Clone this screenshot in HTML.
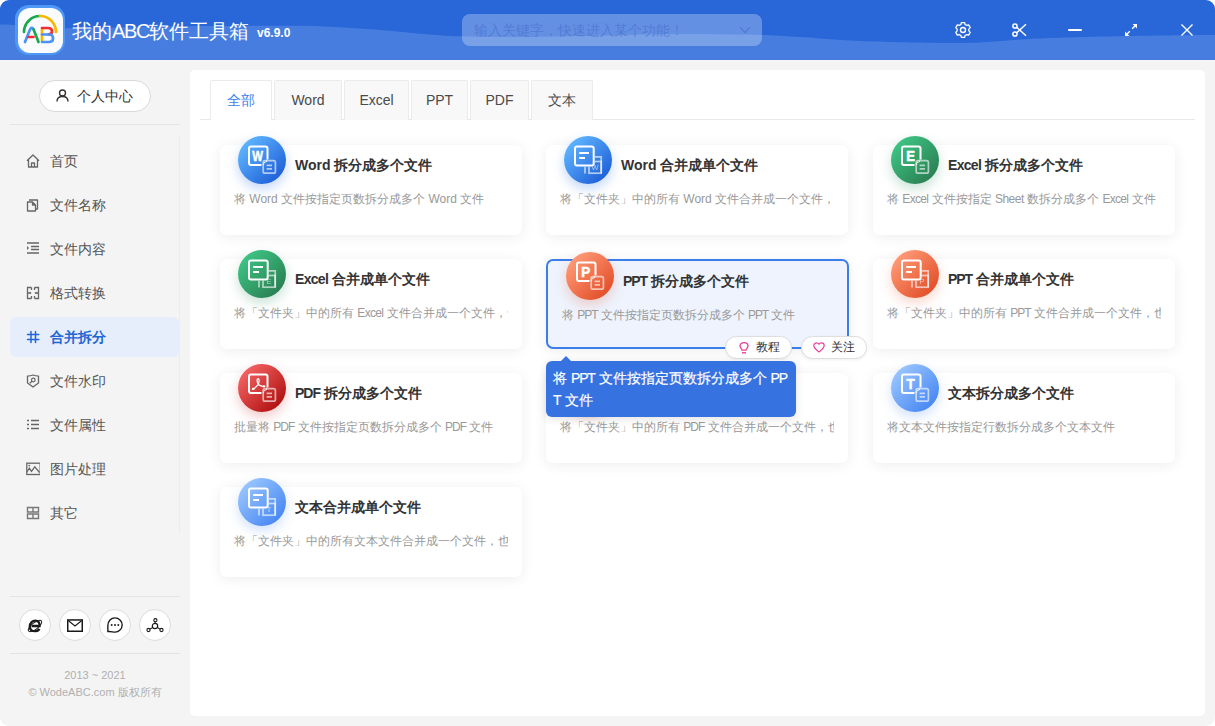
<!DOCTYPE html>
<html><head><meta charset="utf-8">
<style>
*{box-sizing:border-box;margin:0;padding:0}
html,body{width:1215px;height:726px;overflow:hidden;background:#fff;font-family:"Liberation Sans",sans-serif}
.win{position:absolute;left:0;top:0;width:1215px;height:726px;border-radius:9px;overflow:hidden;background:#f4f4f4}
.abs{position:absolute}
.t{position:absolute;white-space:nowrap}
.hdr{position:absolute;left:0;top:0;width:1215px;height:60px}
.logo{position:absolute;left:15px;top:5px;width:50px;height:50px;border-radius:14px;background:#4f98f6}
.logo .in{position:absolute;left:2.5px;top:2.5px;width:45px;height:45px;border-radius:12px;background:#f9fbff}
.title{left:72px;top:20px;font-size:20px;line-height:22px;color:#fff}
.ver{left:257px;top:26px;font-size:12px;line-height:14px;color:#fff;font-weight:bold}
.search{position:absolute;left:462px;top:14px;width:300px;height:32px;border-radius:8px;background:rgba(255,255,255,0.28)}
.search .ph{left:12px;top:8px;font-size:14px;line-height:16px;color:rgba(75,115,205,0.72)}
.side{position:absolute;left:0;top:60px;width:190px;height:666px}
.ubtn{position:absolute;left:39px;top:80px;width:112px;height:32px;border:1px solid #d9d9d9;border-radius:16px;background:#fff}
.sep{position:absolute;left:10px;width:170px;height:1px;background:#e3e3e3}
.nav{position:absolute;left:10px;width:169px;height:40px;border-radius:6px}
.nav .ic{position:absolute;left:16px;top:13px;width:14px;height:14px}
.nav .tx{position:absolute;left:40px;top:11px;font-size:14px;line-height:18px;color:#555;white-space:nowrap}
.nav.on{background:#e6eefc}
.nav.on .tx{color:#2266d4;font-weight:bold}
.circ{position:absolute;top:609px;width:32px;height:32px;border-radius:50%;border:1px solid #dcdcdc;background:#fff}
.circ svg{position:absolute;left:7px;top:7px}
.foot{position:absolute;left:0;width:190px;text-align:center;font-size:11px;line-height:14px;color:#b0b0b0}
.main{position:absolute;left:190px;top:70px;width:1015px;height:646px;background:#fff;border-radius:5px}
.tab{position:absolute;top:80px;height:40px;border:1px solid #ebebeb;border-bottom:none;background:#f8f8f8;border-radius:2px 2px 0 0;font-size:14px;line-height:38px;text-align:center;color:#4a4a4a}
.tab.on{background:#fff;color:#3b80f0;height:40px;z-index:2}
.tabline{position:absolute;left:200px;top:119px;width:995px;height:1px;background:#e8e8e8}
.card{position:absolute;width:302px;height:90px;border-radius:7px;background:#fff;box-shadow:0 2px 14px rgba(0,0,0,0.075)}
.card .ico{position:absolute;left:18px;top:-9px;width:48px;height:48px;border-radius:50%}
.card .ico svg{position:absolute;left:0;top:0}
.card .ttl{position:absolute;left:75px;top:11px;font-size:14px;line-height:18px;font-weight:bold;color:#333;white-space:nowrap}
.card .dsc{position:absolute;left:14px;top:46px;width:274px;overflow:hidden;font-size:12px;line-height:16px;color:#999;white-space:nowrap}
.blue{background:linear-gradient(135deg,#5fb6ff 12%,#1f5fd8 88%);box-shadow:0 5px 12px rgba(40,110,230,0.28)}
.green{background:linear-gradient(135deg,#3ec584 12%,#2a7f52 88%);box-shadow:0 5px 12px rgba(40,140,90,0.25)}
.orange{background:linear-gradient(135deg,#ff9b78 12%,#e24e28 88%);box-shadow:0 5px 12px rgba(230,90,50,0.25)}
.red{background:linear-gradient(135deg,#f46464 12%,#b01010 88%);box-shadow:0 5px 12px rgba(200,40,40,0.25)}
.lblue{background:linear-gradient(135deg,#9ac6ff 12%,#4787f2 88%);box-shadow:0 5px 12px rgba(80,140,240,0.25)}
.card.hov{background:#eef3fd;border:2px solid #3b7eea;box-shadow:0 2px 14px rgba(0,0,0,0.075);width:303px}
.card.hov .ico{left:18px;top:-9px}
.card.hov .ttl{left:75px;top:11px}
.card.hov .dsc{left:14px;top:46px}
.pill{position:absolute;top:336px;height:23px;border:1px solid #dedede;border-radius:11.5px;background:#fff;box-shadow:0 1px 3px rgba(0,0,0,0.06);z-index:5}
.pill .tx{position:absolute;left:30px;top:3px;font-size:12px;line-height:15px;color:#333;white-space:nowrap}
.pill svg{position:absolute;left:13px;top:5px}
.tip{position:absolute;left:546px;top:361px;width:250px;height:56px;border-radius:6px;background:#3773e0;z-index:6;box-shadow:0 2px 8px rgba(0,0,0,0.12)}
.tip:before{content:"";position:absolute;left:15px;top:-5px;border-left:5px solid transparent;border-right:5px solid transparent;border-bottom:5px solid #3773e0}
.tip .tx{position:absolute;left:7px;top:6px;width:240px;font-size:14px;line-height:22px;color:#fff;font-weight:normal;-webkit-text-stroke:0.2px #fff;white-space:nowrap}
</style></head><body>
<div class="win">
 <!-- header -->
 <svg class="hdr" width="1215" height="60" viewBox="0 0 1215 60">
  <rect width="1215" height="60" fill="#2966d8"/>
  <path d="M0,60 L0,24.4 L5,24.6 L10,24.8 L15,25.0 L20,25.2 L25,25.5 L30,25.8 L35,26.2 L40,26.6 L45,27.0 L50,27.4 L55,27.8 L60,28.1 L65,28.2 L70,28.3 L75,28.3 L80,28.2 L85,28.2 L90,28.1 L95,28.0 L100,27.9 L105,27.8 L110,27.7 L115,27.5 L120,27.4 L125,27.3 L130,27.1 L135,27.0 L140,26.9 L145,26.8 L150,26.7 L155,26.6 L160,26.5 L165,26.4 L170,26.4 L175,26.3 L180,26.3 L185,26.2 L190,26.2 L195,26.1 L200,26.1 L205,26.1 L210,26.0 L215,26.0 L220,25.9 L225,25.9 L230,25.9 L235,25.9 L240,25.8 L245,25.8 L250,25.8 L255,25.8 L260,25.8 L265,25.8 L270,25.7 L275,25.7 L280,25.7 L285,25.7 L290,25.7 L295,25.7 L300,25.7 L305,25.7 L310,25.9 L315,26.0 L320,26.3 L325,26.5 L330,26.8 L335,27.0 L340,27.3 L345,27.5 L350,27.9 L355,28.2 L360,28.5 L365,28.9 L370,29.3 L375,29.6 L380,30.0 L385,30.4 L390,30.8 L395,31.2 L400,31.7 L405,32.2 L410,32.7 L415,33.2 L420,33.7 L425,34.1 L430,34.6 L435,35.0 L440,35.3 L445,35.7 L450,35.9 L455,36.2 L460,36.3 L465,36.4 L470,36.5 L475,36.6 L480,36.7 L485,36.8 L490,36.8 L495,36.9 L500,36.9 L505,37.0 L510,37.0 L515,37.0 L520,37.0 L525,37.0 L530,36.9 L535,36.9 L540,36.8 L545,36.7 L550,36.6 L555,36.5 L560,36.4 L565,36.3 L570,36.2 L575,36.0 L580,35.9 L585,35.8 L590,35.7 L595,35.6 L600,35.5 L605,35.4 L610,35.3 L615,35.2 L620,35.1 L625,34.9 L630,34.8 L635,34.7 L640,34.6 L645,34.5 L650,34.3 L655,34.3 L660,34.2 L665,34.1 L670,34.0 L675,34.0 L680,34.0 L685,34.0 L690,34.0 L695,34.0 L700,34.1 L705,34.1 L710,34.1 L715,34.2 L720,34.2 L725,34.3 L730,34.3 L735,34.4 L740,34.5 L745,34.5 L750,34.6 L755,34.7 L760,34.9 L765,35.1 L770,35.3 L775,35.5 L780,35.8 L785,36.1 L790,36.4 L795,36.7 L800,37.0 L805,37.3 L810,37.6 L815,38.0 L820,38.4 L825,38.8 L830,39.2 L835,39.6 L840,39.9 L845,40.3 L850,40.6 L855,40.8 L860,41.0 L865,41.2 L870,41.3 L875,41.5 L880,41.6 L885,41.8 L890,41.9 L895,42.0 L900,42.2 L905,42.3 L910,42.4 L915,42.5 L920,42.6 L925,42.7 L930,42.8 L935,42.8 L940,42.9 L945,42.9 L950,43.0 L955,43.0 L960,43.0 L965,43.0 L970,42.8 L975,42.7 L980,42.4 L985,42.1 L990,41.8 L995,41.4 L1000,41.1 L1005,40.7 L1010,40.3 L1015,39.9 L1020,39.5 L1025,39.2 L1030,38.9 L1035,38.6 L1040,38.4 L1045,38.2 L1050,38.0 L1055,37.9 L1060,37.7 L1065,37.6 L1070,37.4 L1075,37.2 L1080,37.1 L1085,37.0 L1090,36.8 L1095,36.7 L1100,36.6 L1105,36.5 L1110,36.4 L1115,36.3 L1120,36.2 L1125,36.1 L1130,36.0 L1135,35.9 L1140,35.8 L1145,35.8 L1150,35.7 L1155,35.6 L1160,35.5 L1165,35.5 L1170,35.4 L1175,35.3 L1180,35.3 L1185,35.2 L1190,35.2 L1195,35.1 L1200,35.1 L1205,35.1 L1210,35.0 L1215,35.0 L1215,60 Z" fill="#467ddf"/>
 </svg>
 <div class="logo"><div class="in"></div>
  <svg class="abs" style="left:0;top:0" width="50" height="50" viewBox="15 5 50 50">
   <path d="M24,32 A16,16 0 0 1 40,16" fill="none" stroke="#18a94a" stroke-width="2.7" stroke-linecap="round"/>
   <path d="M40,16 A16,16 0 0 1 56,32" fill="none" stroke="#f7b800" stroke-width="2.7" stroke-linecap="round"/>
   <path d="M25,42 L30,29.5 Q31.8,26 33.6,29.5" fill="none" stroke="#4a93f5" stroke-width="2.7" stroke-linecap="round"/>
   <path d="M33.6,29.5 L38.5,42" fill="none" stroke="#18a94a" stroke-width="2.7" stroke-linecap="round"/>
   <path d="M28.5,37 L33.5,37" fill="none" stroke="#f03030" stroke-width="2.7" stroke-linecap="round"/>
   <path d="M42,29 L42,41" fill="none" stroke="#f7b800" stroke-width="2.7" stroke-linecap="butt"/>
   <path d="M42,28 L48,28 Q52,28 52,31.3 Q52,34.3 48.5,34.3" fill="none" stroke="#f03030" stroke-width="2.7" stroke-linecap="round"/>
   <path d="M42,34.5 L49,34.5 Q53,34.5 53,38.2 Q53,42 49,42 L42,42" fill="none" stroke="#4a93f5" stroke-width="2.7" stroke-linecap="round"/>
  </svg>
 </div>
 <div class="t title">我的<span style="letter-spacing:-1.4px">ABC</span>软件工具箱</div>
 <div class="t ver">v6.9.0</div>
 <div class="search"><div class="t ph">输入关键字，快速进入某个功能！</div>
  <svg class="abs" style="left:277px;top:12px" width="12" height="8" viewBox="0 0 12 8"><path d="M1,1 L6,6.5 L11,1" fill="none" stroke="rgba(70,110,200,0.6)" stroke-width="1.3"/></svg>
 </div>
 <!-- header icons -->
 <svg class="abs" style="left:955px;top:22px" width="16" height="16" viewBox="0 0 16 16">
  <path d="M5.89,2.49 L6.42,0.57 L9.58,0.57 L10.11,2.49 L11.71,3.41 L13.65,2.91 L15.23,5.65 L13.83,7.08 L13.83,8.92 L15.23,10.35 L13.65,13.09 L11.71,12.59 L10.11,13.51 L9.58,15.43 L6.42,15.43 L5.89,13.51 L4.29,12.59 L2.35,13.09 L0.77,10.35 L2.17,8.92 L2.17,7.08 L0.77,5.65 L2.35,2.91 L4.29,3.41 Z" fill="none" stroke="#fff" stroke-width="1.3" stroke-linejoin="round"/>
  <circle cx="8" cy="8" r="2.5" fill="none" stroke="#fff" stroke-width="1.4"/>
 </svg>
 <svg class="abs" style="left:1012px;top:23px" width="15" height="14" viewBox="0 0 15 14">
  <circle cx="3" cy="3" r="2.1" fill="none" stroke="#fff" stroke-width="1.5"/>
  <circle cx="3" cy="11" r="2.1" fill="none" stroke="#fff" stroke-width="1.5"/>
  <path d="M4.7,4.3 L14,12.8 M4.7,9.7 L14,1.2" stroke="#fff" stroke-width="1.5"/>
 </svg>
 <div class="abs" style="left:1068px;top:29px;width:14px;height:2px;background:#fff;border-radius:1px"></div>
 <svg class="abs" style="left:1124px;top:23px" width="14" height="14" viewBox="0 0 14 14"><path d="M8.2,5.8 L12.5,1.5 M5.8,8.2 L1.5,12.5" stroke="#fff" stroke-width="1.4"/><path d="M8.6,1 L13,1 L13,5.4 Z M1,8.6 L1,13 L5.4,13 Z" fill="#fff"/></svg>
 <svg class="abs" style="left:1180px;top:23px" width="14" height="14" viewBox="0 0 14 14"><path d="M1.5,1.5 L12.5,12.5 M12.5,1.5 L1.5,12.5" stroke="#fff" stroke-width="1.4"/></svg>

 <!-- sidebar -->
 <div class="ubtn">
  <svg class="abs" style="left:16px;top:8px" width="13" height="13" viewBox="0 0 13 13">
   <circle cx="6.5" cy="4" r="3" fill="none" stroke="#333" stroke-width="1.4"/>
   <path d="M1,12.5 C1,8.5 3.5,7.5 6.5,7.5 C9.5,7.5 12,8.5 12,12.5" fill="none" stroke="#333" stroke-width="1.4"/>
  </svg>
  <div class="t" style="left:37px;top:6px;font-size:14px;line-height:18px;color:#333">个人中心</div>
 </div>
 <div class="sep" style="top:124px"></div>
 <div class="abs" style="left:179px;top:136px;width:1px;height:398px;background:#ececec"></div>

 <div class="nav" style="top:141px">
  <svg class="ic" viewBox="0 0 14 14"><path d="M1,6.8 L7,1 L13,6.8 M2.5,5.5 L2.5,13 L11.5,13 L11.5,5.5 M5.5,13 L5.5,9 L8.5,9 L8.5,13" fill="none" stroke="#666" stroke-width="1.3" stroke-linejoin="round"/></svg>
  <div class="tx">首页</div></div>
 <div class="nav" style="top:185px">
  <svg class="ic" viewBox="0 0 14 14"><path d="M3,2 L11.5,2 L11.5,11 L9.5,11 M1.5,4 L6.5,4 L9.5,7 L9.5,13 L1.5,13 Z M6.5,4 L6.5,7 L9.5,7" fill="none" stroke="#666" stroke-width="1.3" stroke-linejoin="round"/></svg>
  <div class="tx">文件名称</div></div>
 <div class="nav" style="top:229px">
  <svg class="ic" viewBox="0 0 14 14"><path d="M1,1 L13,1 M5,4.5 L13,4.5 M5,7.5 L13,7.5 M1,11 L13,11" stroke="#666" stroke-width="1.3"/><path d="M1,4 L3,6 L1,8 Z" fill="#666"/></svg>
  <div class="tx">文件内容</div></div>
 <div class="nav" style="top:273px">
  <svg class="ic" viewBox="0 0 14 14"><path d="M5.5,1.5 L1.5,1.5 L1.5,12.5 L5.5,12.5 M8.5,1.5 L12.5,1.5 L12.5,12.5 L8.5,12.5 M5.5,1.5 L5.5,4 M5.5,10 L5.5,12.5 M8.5,1.5 L8.5,4 M8.5,10 L8.5,12.5 M1.5,7 L4,7 M10,7 L12.5,7" fill="none" stroke="#666" stroke-width="1.3"/><path d="M3.8,5.5 L5.6,7 L3.8,8.5 Z M10.2,5.5 L8.4,7 L10.2,8.5 Z" fill="#666"/></svg>
  <div class="tx">格式转换</div></div>
 <div class="nav on" style="top:317px">
  <svg class="ic" viewBox="0 0 14 14"><path d="M5,1.5 L5,12.5 M9.5,1.5 L9.5,12.5 M1.5,4.5 L12.8,4.5 M1.5,9.5 L12.8,9.5" stroke="#1f66d6" stroke-width="1.5" stroke-linecap="round"/></svg>
  <div class="tx">合并拆分</div></div>
 <div class="nav" style="top:361px">
  <svg class="ic" viewBox="0 0 14 14"><path d="M7,1 C5,1.6 3,2 1.5,2.2 L1.5,9 L7,13 L12.5,9 L12.5,2.2 C11,2 9,1.6 7,1 Z" fill="none" stroke="#666" stroke-width="1.3" stroke-linejoin="round"/><circle cx="7.3" cy="6" r="1.8" fill="none" stroke="#666" stroke-width="1.2"/><path d="M6,7.3 L3.8,9.3" stroke="#666" stroke-width="1.2"/></svg>
  <div class="tx">文件水印</div></div>
 <div class="nav" style="top:405px">
  <svg class="ic" viewBox="0 0 14 14"><path d="M1,2.5 L3,2.5 M5,2.5 L13,2.5 M1,6.5 L3,6.5 M5,6.5 L13,6.5 M1,10.5 L3,10.5 M5,10.5 L13,10.5" stroke="#666" stroke-width="1.6"/></svg>
  <div class="tx">文件属性</div></div>
 <div class="nav" style="top:449px">
  <svg class="ic" viewBox="0 0 14 14"><rect x="0.8" y="1.2" width="13.4" height="11.3" fill="none" stroke="#666" stroke-width="1.3"/><path d="M1,10 L3.3,6.2 L5.5,9.4 L8.8,4.8 L13.5,10.5" fill="none" stroke="#666" stroke-width="1.2"/><circle cx="3.3" cy="3.6" r="0.9" fill="#666"/></svg>
  <div class="tx">图片处理</div></div>
 <div class="nav" style="top:493px">
  <svg class="ic" viewBox="0 0 14 14"><path d="M1.5,1.5 H12.5 V6 H1.5 Z M1.5,8 H12.5 V12.5 H1.5 Z M7,1.5 V6 M7,8 V12.5" fill="none" stroke="#777" stroke-width="1.4"/></svg>
  <div class="tx">其它</div></div>

 <div class="sep" style="top:596px"></div>
 <div class="circ" style="left:19px">
  <svg width="16" height="16" viewBox="0 0 16 16"><path d="M4.6,9 H12.6 C12.9,5.6 11,3.6 8.3,3.6 C5.3,3.6 2.8,6.2 2.8,9.4 C2.8,12.4 5,14.2 8,14.2 C10,14.2 11.6,13.4 12.6,12" fill="none" stroke="#1a1a1a" stroke-width="2.3"/><ellipse cx="8" cy="9" rx="8.2" ry="3.2" transform="rotate(-38 8 9)" fill="none" stroke="#1a1a1a" stroke-width="1"/></svg>
 </div>
 <div class="circ" style="left:59px">
  <svg width="16" height="16" viewBox="0 0 16 16"><rect x="0.75" y="2.95" width="14.5" height="11.3" fill="none" stroke="#1a1a1a" stroke-width="1.5"/><path d="M1.5,3.8 L8,9 L14.5,3.8" fill="none" stroke="#1a1a1a" stroke-width="1.1"/></svg>
 </div>
 <div class="circ" style="left:99px">
  <svg width="16" height="16" viewBox="0 0 16 16" style="overflow:visible"><g transform="translate(8,8) scale(1.1) translate(-8,-8)"><path d="M1.5,14 L1.5,8.5 C1.5,4.5 4.5,1.5 8,1.5 C11.5,1.5 14.5,4.3 14.5,8 C14.5,11.7 11.5,14.5 8,14.5 C6,14.5 4,13.5 1.5,14 Z" fill="none" stroke="#1a1a1a" stroke-width="1.25" stroke-linejoin="round"/><circle cx="5" cy="8" r="0.9" fill="#222"/><circle cx="8" cy="8" r="0.9" fill="#222"/><circle cx="11" cy="8" r="0.9" fill="#222"/></g></svg>
 </div>
 <div class="circ" style="left:139px">
  <svg width="16" height="16" viewBox="0 0 16 16" style="overflow:visible"><circle cx="8.4" cy="3.2" r="1.6" fill="none" stroke="#1a1a1a" stroke-width="1.1"/><circle cx="8" cy="9" r="2.7" fill="none" stroke="#1a1a1a" stroke-width="1.2"/><circle cx="1.5" cy="13" r="1.6" fill="none" stroke="#1a1a1a" stroke-width="1.1"/><circle cx="14.5" cy="13" r="1.6" fill="none" stroke="#1a1a1a" stroke-width="1.1"/><path d="M8.2,4.8 L8.1,6.3 M5.7,10.4 L2.9,12.2 M10.3,10.4 L13.1,12.2" stroke="#1a1a1a" stroke-width="1.1"/></svg>
 </div>
 <div class="sep" style="top:653px"></div>
 <div class="foot" style="top:668px">2013 ~ 2021</div>
 <div class="foot" style="top:685px">© WodeABC.com 版权所有</div>

 <!-- main -->
 <div class="main"></div>
 <div class="tabline"></div>
 <div class="tab on" style="left:210px;width:62px">全部</div>
 <div class="tab" style="left:274px;width:68px">Word</div>
 <div class="tab" style="left:344px;width:65px">Excel</div>
 <div class="tab" style="left:411px;width:57px">PPT</div>
 <div class="tab" style="left:470px;width:59px">PDF</div>
 <div class="tab" style="left:531px;width:62px">文本</div>

 <div id="cards"><svg width="0" height="0" style="position:absolute"><defs><mask id="mk" maskUnits="userSpaceOnUse" x="0" y="0" width="48" height="48"><rect x="0" y="0" width="48" height="48" fill="#fff"/><rect x="10" y="9.6" width="20.7" height="20.9" rx="2.5" fill="#000"/></mask></defs></svg>
<div class="card" style="left:220px;top:145px"><div class="ico blue"><svg width="48" height="48" viewBox="0 0 48 48"><path d="M13,10.5 H27.5 Q29.5,10.5 29.5,12.5 V23.5 M23.5,29 H13 Q11,29 11,27 V12.5 Q11,10.5 13,10.5" fill="none" stroke="#fff" stroke-width="2"/><path d="M25,28.5 L29,24.5" stroke="#fff" stroke-width="1.4" stroke-dasharray="1.2 0.8"/><text transform="translate(19.6,24.8) scale(0.78,1)" x="0" y="0" text-anchor="middle" font-family="Liberation Sans" font-weight="bold" font-size="14.5" fill="#fff" stroke="#fff" stroke-width="0.55">W</text><rect x="25.2" y="24.7" width="12.2" height="12.5" rx="1.8" fill="none" stroke="rgba(255,255,255,0.62)" stroke-width="1.7"/><path d="M28.6,29.3 H34 M28.6,32.8 H34" stroke="rgba(255,255,255,0.62)" stroke-width="1.7"/></svg></div><div class="ttl">Word 拆分成多个文件</div><div class="dsc">将 Word 文件按指定页数拆分成多个 Word 文件</div></div>
<div class="card" style="left:546px;top:145px"><div class="ico blue"><svg width="48" height="48" viewBox="0 0 48 48"><g mask="url(#mk)"><path d="M21,30.5 V37.5 M30.5,20.8 H37.2 V37.2" fill="none" stroke="rgba(255,255,255,0.62)" stroke-width="1.7"/><rect x="25" y="25.5" width="12.2" height="11.7" fill="none" stroke="rgba(255,255,255,0.62)" stroke-width="1.7"/><text x="31" y="34" text-anchor="middle" font-family="Liberation Sans" font-size="7.5" fill="rgba(255,255,255,0.62)">W</text></g><rect x="11" y="10.6" width="18.7" height="18.9" rx="2" fill="none" stroke="#fff" stroke-width="2"/><path d="M15.2,17 H25 M15.2,22 H21" stroke="#fff" stroke-width="2"/></svg></div><div class="ttl">Word 合并成单个文件</div><div class="dsc">将「文件夹」中的所有 Word 文件合并成一个文件，也可以</div></div>
<div class="card" style="left:873px;top:145px"><div class="ico green"><svg width="48" height="48" viewBox="0 0 48 48"><path d="M13,10.5 H27.5 Q29.5,10.5 29.5,12.5 V23.5 M23.5,29 H13 Q11,29 11,27 V12.5 Q11,10.5 13,10.5" fill="none" stroke="#fff" stroke-width="2"/><path d="M25,28.5 L29,24.5" stroke="#fff" stroke-width="1.4" stroke-dasharray="1.2 0.8"/><text transform="translate(19.6,24.8) scale(0.9,1)" x="0" y="0" text-anchor="middle" font-family="Liberation Sans" font-weight="bold" font-size="14.5" fill="#fff" stroke="#fff" stroke-width="0.55">E</text><rect x="25.2" y="24.7" width="12.2" height="12.5" rx="1.8" fill="none" stroke="rgba(255,255,255,0.62)" stroke-width="1.7"/><path d="M28.6,29.3 H34 M28.6,32.8 H34" stroke="rgba(255,255,255,0.62)" stroke-width="1.7"/></svg></div><div class="ttl"><span style="letter-spacing:-0.7px">Excel</span> 拆分成多个文件</div><div class="dsc">将 <span style="letter-spacing:-0.7px">Excel</span> 文件按指定 <span style="letter-spacing:-0.5px">Sheet</span> 数拆分成多个 <span style="letter-spacing:-0.7px">Excel</span> 文件</div></div>
<div class="card" style="left:220px;top:259px"><div class="ico green"><svg width="48" height="48" viewBox="0 0 48 48"><g mask="url(#mk)"><path d="M21,30.5 V37.5 M30.5,20.8 H37.2 V37.2" fill="none" stroke="rgba(255,255,255,0.62)" stroke-width="1.7"/><rect x="25" y="25.5" width="12.2" height="11.7" fill="none" stroke="rgba(255,255,255,0.62)" stroke-width="1.7"/><text x="31" y="34" text-anchor="middle" font-family="Liberation Sans" font-size="7.5" fill="rgba(255,255,255,0.62)">E</text></g><rect x="11" y="10.6" width="18.7" height="18.9" rx="2" fill="none" stroke="#fff" stroke-width="2"/><path d="M15.2,17 H25 M15.2,22 H21" stroke="#fff" stroke-width="2"/></svg></div><div class="ttl"><span style="letter-spacing:-0.7px">Excel</span> 合并成单个文件</div><div class="dsc">将「文件夹」中的所有 <span style="letter-spacing:-0.7px">Excel</span> 文件合并成一个文件，也可以</div></div>
<div class="card hov" style="left:546px;top:259px"><div class="ico orange"><svg width="48" height="48" viewBox="0 0 48 48"><path d="M13,10.5 H27.5 Q29.5,10.5 29.5,12.5 V23.5 M23.5,29 H13 Q11,29 11,27 V12.5 Q11,10.5 13,10.5" fill="none" stroke="#fff" stroke-width="2"/><path d="M25,28.5 L29,24.5" stroke="#fff" stroke-width="1.4" stroke-dasharray="1.2 0.8"/><text transform="translate(19.6,24.8) scale(0.92,1)" x="0" y="0" text-anchor="middle" font-family="Liberation Sans" font-weight="bold" font-size="14.5" fill="#fff" stroke="#fff" stroke-width="0.55">P</text><rect x="25.2" y="24.7" width="12.2" height="12.5" rx="1.8" fill="none" stroke="rgba(255,255,255,0.62)" stroke-width="1.7"/><path d="M28.6,29.3 H34 M28.6,32.8 H34" stroke="rgba(255,255,255,0.62)" stroke-width="1.7"/></svg></div><div class="ttl"><span style="letter-spacing:-1.1px">PPT</span> 拆分成多个文件</div><div class="dsc">将 <span style="letter-spacing:-1.1px">PPT</span> 文件按指定页数拆分成多个 <span style="letter-spacing:-1.1px">PPT</span> 文件</div></div>
<div class="card" style="left:873px;top:259px"><div class="ico orange"><svg width="48" height="48" viewBox="0 0 48 48"><g mask="url(#mk)"><path d="M21,30.5 V37.5 M30.5,20.8 H37.2 V37.2" fill="none" stroke="rgba(255,255,255,0.62)" stroke-width="1.7"/><rect x="25" y="25.5" width="12.2" height="11.7" fill="none" stroke="rgba(255,255,255,0.62)" stroke-width="1.7"/><text x="31" y="34" text-anchor="middle" font-family="Liberation Sans" font-size="7.5" fill="rgba(255,255,255,0.62)">P</text></g><rect x="11" y="10.6" width="18.7" height="18.9" rx="2" fill="none" stroke="#fff" stroke-width="2"/><path d="M15.2,17 H25 M15.2,22 H21" stroke="#fff" stroke-width="2"/></svg></div><div class="ttl"><span style="letter-spacing:-1.1px">PPT</span> 合并成单个文件</div><div class="dsc">将「文件夹」中的所有 <span style="letter-spacing:-1.1px">PPT</span> 文件合并成一个文件，也可以</div></div>
<div class="card" style="left:220px;top:373px"><div class="ico red"><svg width="48" height="48" viewBox="0 0 48 48"><path d="M13,10.5 H27.5 Q29.5,10.5 29.5,12.5 V23.5 M23.5,29 H13 Q11,29 11,27 V12.5 Q11,10.5 13,10.5" fill="none" stroke="#fff" stroke-width="2"/><path d="M25,28.5 L29,24.5" stroke="#fff" stroke-width="1.4" stroke-dasharray="1.2 0.8"/><path d="M20.2,20.6 C19.3,18.6 18.9,16.6 19.3,15.3 C19.6,14.4 20.7,14.4 20.9,15.3 C21.2,16.6 21,18.6 20.2,20.6 L16.3,24.6 C15.6,25.4 14.6,25.9 14.4,25.2 C14.2,24.5 15.3,24.1 16.3,24.6 M20.2,20.6 L24.4,22.4 C25.5,22.8 26.7,23.2 26.8,22.4 C26.9,21.6 25.4,21.7 24.4,22.4" fill="none" stroke="#fff" stroke-width="1.25" stroke-linejoin="round" stroke-linecap="round"/><rect x="25.2" y="24.7" width="12.2" height="12.5" rx="1.8" fill="none" stroke="rgba(255,255,255,0.62)" stroke-width="1.7"/><path d="M28.6,29.3 H34 M28.6,32.8 H34" stroke="rgba(255,255,255,0.62)" stroke-width="1.7"/></svg></div><div class="ttl"><span style="letter-spacing:-1.0px">PDF</span> 拆分成多个文件</div><div class="dsc">批量将 <span style="letter-spacing:-1.0px">PDF</span> 文件按指定页数拆分成多个 <span style="letter-spacing:-1.0px">PDF</span> 文件</div></div>
<div class="card" style="left:546px;top:373px"><div class="ico red"><svg width="48" height="48" viewBox="0 0 48 48"><g mask="url(#mk)"><path d="M21,30.5 V37.5 M30.5,20.8 H37.2 V37.2" fill="none" stroke="rgba(255,255,255,0.62)" stroke-width="1.7"/><rect x="25" y="25.5" width="12.2" height="11.7" fill="none" stroke="rgba(255,255,255,0.62)" stroke-width="1.7"/><text x="31" y="34" text-anchor="middle" font-family="Liberation Sans" font-size="7.5" fill="rgba(255,255,255,0.62)">P</text></g><rect x="11" y="10.6" width="18.7" height="18.9" rx="2" fill="none" stroke="#fff" stroke-width="2"/><path d="M15.2,17 H25 M15.2,22 H21" stroke="#fff" stroke-width="2"/></svg></div><div class="ttl"><span style="letter-spacing:-1.0px">PDF</span> 合并成单个文件</div><div class="dsc">将「文件夹」中的所有 <span style="letter-spacing:-1.0px">PDF</span> 文件合并成一个文件，也可以</div></div>
<div class="card" style="left:873px;top:373px"><div class="ico lblue"><svg width="48" height="48" viewBox="0 0 48 48"><path d="M13,10.5 H27.5 Q29.5,10.5 29.5,12.5 V23.5 M23.5,29 H13 Q11,29 11,27 V12.5 Q11,10.5 13,10.5" fill="none" stroke="#fff" stroke-width="2"/><path d="M25,28.5 L29,24.5" stroke="#fff" stroke-width="1.4" stroke-dasharray="1.2 0.8"/><text transform="translate(19.6,24.8) scale(0.92,1)" x="0" y="0" text-anchor="middle" font-family="Liberation Sans" font-weight="bold" font-size="14.5" fill="#fff" stroke="#fff" stroke-width="0.55">T</text><rect x="25.2" y="24.7" width="12.2" height="12.5" rx="1.8" fill="none" stroke="rgba(255,255,255,0.62)" stroke-width="1.7"/><path d="M28.6,29.3 H34 M28.6,32.8 H34" stroke="rgba(255,255,255,0.62)" stroke-width="1.7"/></svg></div><div class="ttl">文本拆分成多个文件</div><div class="dsc">将文本文件按指定行数拆分成多个文本文件</div></div>
<div class="card" style="left:220px;top:487px"><div class="ico lblue"><svg width="48" height="48" viewBox="0 0 48 48"><g mask="url(#mk)"><path d="M21,30.5 V37.5 M30.5,20.8 H37.2 V37.2" fill="none" stroke="rgba(255,255,255,0.62)" stroke-width="1.7"/><rect x="25" y="25.5" width="12.2" height="11.7" fill="none" stroke="rgba(255,255,255,0.62)" stroke-width="1.7"/><text x="31" y="34" text-anchor="middle" font-family="Liberation Sans" font-size="7.5" fill="rgba(255,255,255,0.62)">T</text></g><rect x="11" y="10.6" width="18.7" height="18.9" rx="2" fill="none" stroke="#fff" stroke-width="2"/><path d="M15.2,17 H25 M15.2,22 H21" stroke="#fff" stroke-width="2"/></svg></div><div class="ttl">文本合并成单个文件</div><div class="dsc">将「文件夹」中的所有文本文件合并成一个文件，也可以</div></div>
<div class="pill" style="left:725px;width:67px"><svg width="10" height="12" viewBox="0 0 10 12"><path d="M3,8.2 C3,6.8 1,5.8 1,4 C1,2 2.8,0.7 5,0.7 C7.2,0.7 9,2 9,4 C9,5.8 7,6.8 7,8.2 Z" fill="none" stroke="#e8409a" stroke-width="1.3" stroke-linejoin="round"/><path d="M3,10.8 H7" stroke="#e8409a" stroke-width="1.4"/></svg><div class="tx">教程</div></div>
<div class="pill" style="left:801px;width:66px"><svg style="left:11px" width="12" height="11" viewBox="0 0 12 11"><path d="M6,10 C3,7.8 0.8,6 0.8,3.6 C0.8,1.9 2.1,0.8 3.5,0.8 C4.6,0.8 5.5,1.4 6,2.3 C6.5,1.4 7.4,0.8 8.5,0.8 C9.9,0.8 11.2,1.9 11.2,3.6 C11.2,6 9,7.8 6,10 Z" fill="none" stroke="#e8409a" stroke-width="1.2" stroke-linejoin="round"/></svg><div class="tx" style="left:29px">关注</div></div>
<div class="tip"><div class="tx">将 <span style="letter-spacing:-1.1px">PPT</span> 文件按指定页数拆分成多个 <span style="letter-spacing:-1.1px">PP</span><br>T 文件</div></div>
</div>
</div>
</body></html>
